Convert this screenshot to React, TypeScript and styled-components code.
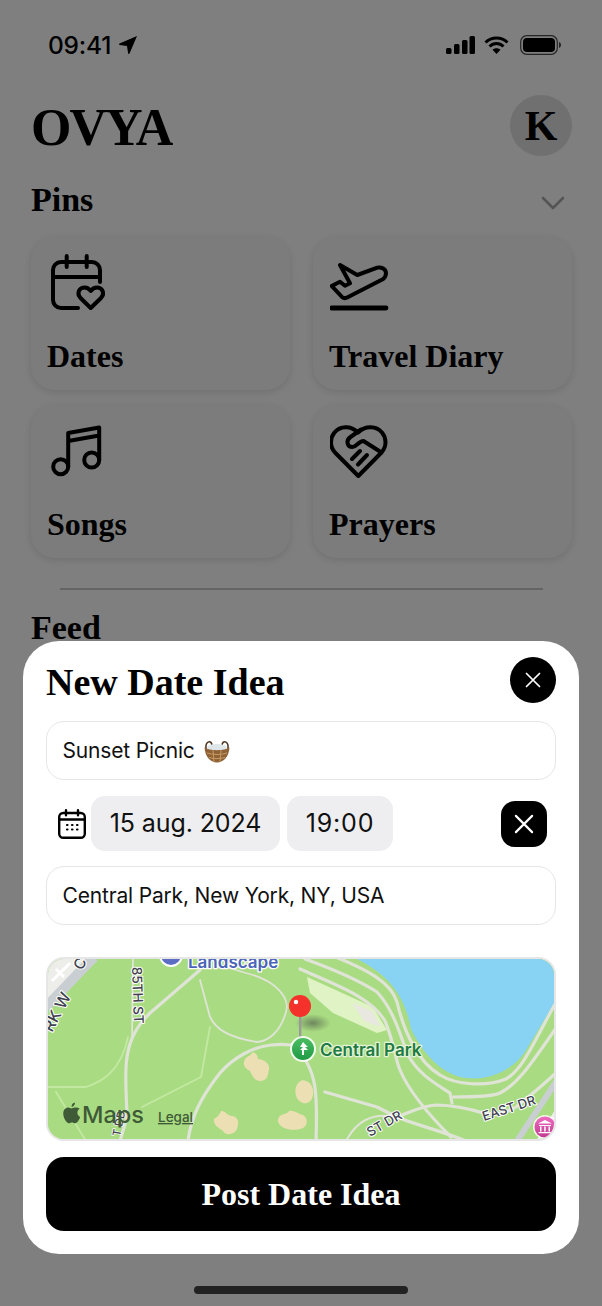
import React from "react";
import styled, { createGlobalStyle } from "styled-components";

const Global = createGlobalStyle`
  html, body { margin: 0; padding: 0; background: #fff; }
  * { box-sizing: border-box; }
`;
const serif = `"Liberation Serif", "Times New Roman", serif`;
const sans = `Inter, "Liberation Sans", Arial, sans-serif`;

const Screen = styled.div`
  position: relative; width: 602px; height: 1306px; overflow: hidden; background: #fff; color: #000;
`;
const Page = styled.div`display: flex; flex-direction: column; padding: 0 30px 0 31px;`;
const StatusBar = styled.div`
  height: 95px; margin: 0 11px 0 17px; padding-top: 35px; display: flex; align-items: flex-start; justify-content: space-between;
`;
const StatusGroup = styled.div<{ $gap: number }>`display: flex; align-items: center; gap: ${p => p.$gap}px; height: 20px;`;
const Time = styled.span`font: 500 24.5px/20px ${sans}; letter-spacing: -0.2px;`;
const Header = styled.header`height: 61px; display: flex; align-items: center; justify-content: space-between;`;
const Logo = styled.h1`margin: 0; font: 700 52px/61px ${serif}; letter-spacing: -2px; position: relative; top: 2px;`;
const Avatar = styled.div`
  width: 62px; height: 61px; border-radius: 50%; background: #e0e0e0; display: flex; align-items: center; justify-content: center;
  font: 700 42px/1 ${serif};
`;
const SectionHead = styled.div`margin: 28px 0 21px; height: 32px; display: flex; align-items: center; justify-content: space-between;`;
const SectionTitle = styled.h2`margin: 0; font: 700 34px/32px ${serif};`;
const Chevron = styled.svg`margin: 6px 7px 0 0; fill: none; stroke: #a8a8a8; stroke-width: 2.6; stroke-linecap: round; stroke-linejoin: round;`;
const Grid = styled.div`display: grid; grid-template-columns: 259px 259px; grid-auto-rows: 153px; column-gap: 23px; row-gap: 15px;`;
const Card = styled.div`
  background: #f8f8f8; border-radius: 24px; box-shadow: 0 2px 9px rgba(0,0,0,.13);
  padding: 13px 16px 14px 16px; display: flex; flex-direction: column; justify-content: space-between;
`;
const IconBox = styled.svg`
  width: 64px; height: 64px; margin-left: 1px; fill: none; stroke: #000; stroke-linecap: round; stroke-linejoin: round; stroke-width: 4;
`;
const CardLabel = styled.div`font: 700 32px/40px ${serif};`;
const Divider = styled.hr`margin: 30px 29px 0; border: 0; border-top: 2px solid #c8c8c8;`;
const FeedTitle = styled(SectionTitle)`margin-top: 22px;`;
const Scrim = styled.div`position: absolute; inset: 0; background: rgba(0,0,0,.5);`;
const Sheet = styled.section`
  position: absolute; left: 23px; top: 641px; width: 556px; height: 613px; background: #fff; border-radius: 36px;
  padding: 16px 23px 23px; display: flex; flex-direction: column;
`;
const SheetHead = styled.div`height: 46px; display: flex; align-items: center; justify-content: space-between;`;
const SheetTitle = styled.h2`margin: 4px 0 0; font: 700 38px/46px ${serif};`;
const RoundClose = styled.button`
  width: 46px; height: 46px; border: 0; padding: 0; border-radius: 50%; background: #000; display: flex; align-items: center; justify-content: center;
`;
const SquareClose = styled(RoundClose)`border-radius: 14px; margin-left: auto; margin-right: 9px;`;
const Field = styled.div<{ $top: number }>`
  margin-top: ${p => p.$top}px; height: 59px; border: 1.5px solid #e6e6e6; border-radius: 18px; padding: 0 15.5px;
  display: flex; align-items: center; gap: 8px; font: 400 21px/1 ${sans}; letter-spacing: -0.17px; color: #111;
`;
const DateRow = styled.div`margin-top: 16px; height: 55px; padding-left: 12px; display: flex; align-items: center;`;
const Pill = styled.div<{ $w: number; $gap: number; $track: number }>`
  width: ${p => p.$w}px; height: 55px; margin-left: ${p => p.$gap}px; border-radius: 14px; background: #eeeef0;
  display: flex; align-items: center; justify-content: center; font: 400 25px/1 ${sans}; letter-spacing: ${p => p.$track}px; color: #111;
`;
const MapFrame = styled.div`
  margin-top: 32px; height: 184px; border: 2px solid #e6e6e6; border-radius: 18px; overflow: hidden; background: #a9dc82;
`;
const MapSvg = styled.svg`display: block; width: 100%; height: 100%;`;
const PostButton = styled.button`
  margin-top: 16px; height: 74px; border: 0; border-radius: 18px; background: #000; color: #fff; font: 700 32px/1 ${serif};
`;
const HomeBar = styled.div`position: absolute; left: 194px; top: 1286px; width: 214px; height: 8px; border-radius: 4px; background: #222;`;

const Cross = ({ s }: { s: number }) => (
  <svg width={s} height={s} viewBox="0 0 16 16" fill="none" stroke="#fff" strokeWidth="1.7" strokeLinecap="round">
    <path d="M1.5 1.5l13 13M14.5 1.5l-13 13" />
  </svg>
);

const cards: { label: string; icon: React.ReactNode }[] = [
  { label: "Dates", icon: (
    <>
      <path d="M30 58H13a8 8 0 0 1-8-8V20a8 8 0 0 1 8-8h31a8 8 0 0 1 8 8v12" />
      <path d="M18.700 6v11M38.700 6v11M5 27h47" />
      <path d="M42.700 58L32.500 48C28 43 31.500 37.500 36.500 37.500 39 37.500 41 38.500 42.700 41 44.500 38.500 46.500 37.500 49 37.500 54 37.500 57.500 43 53 48z" />
    </>
  ) },
  { label: "Travel Diary", icon: (
    <g transform="translate(-2 0)">
      <path d="M12 15L29.300 25 49.300 17.700c4-1.200 8.700 1.600 8.700 5.600 0 2.500-1.300 4.500-3.300 6L18.700 47.700c-1.800.7-3.800.4-5-1L3.700 36l8.300-4.300 5 4 5-2.400L12 15z" />
      <path d="M3.500 58h54.500" strokeWidth="4.800" />
    </g>
  ) },
  { label: "Songs", icon: (
    <g transform="translate(0 6)">
      <circle cx="12.700" cy="42.700" r="7.500" />
      <circle cx="43.700" cy="36" r="7.500" />
      <path d="M20.200 42.700V9L51.200 3.500V36M20.200 17L51.200 11.500" />
    </g>
  ) },
  { label: "Prayers", icon: (
    <g transform="translate(-2 1)">
      <path d="M30.300 57L7 33.500C1.500 27.500 2 19 6.500 13.500 12 7 22.500 6 30 13.500 37.500 6 48.500 7 54 13.500c4.500 5.500 5 14 -.5 20z" />
      <path d="M33 10.500L22.500 18c-5 3.500-3.500 10 2 10 4 0 6-6 11-6l18 11.500" />
      <path d="M30 45.500l9-9.500M24 40l8-8" />
    </g>
  ) },
];

const Basket = () => (
  <svg width="28" height="25" viewBox="0 0 28 25">
    <path d="M3 11C2 3 9 1 9 8M25 11c1-8-6-10-6-3" fill="none" stroke="#4d3522" strokeWidth="1.600" />
    <ellipse cx="14" cy="9.500" rx="10" ry="3.600" fill="#dfe6ea" />
    <path d="M1.500 9.500C6 13 22 13 26.500 9.500 26 18 21 24.500 14 24.500S2 18 1.500 9.500z" fill="#8f6337" />
    <path d="M4 15c6 2 14 2 20 0M6 19.500c5 1.500 11 1.500 16 0M10 12l1 12M18 12l-1 12" fill="none" stroke="#c79a62" strokeWidth="1" />
  </svg>
);

const label = { fontFamily: "Inter, sans-serif", paintOrder: "stroke" as const, strokeLinejoin: "round" as const };

const MapArt = () => (
  <MapSvg viewBox="2 2 506 180" preserveAspectRatio="none">
    <defs>
      <linearGradient id="mus" x1="0" y1="0" x2="0" y2="1"><stop offset="0" stopColor="#f06ac0" /><stop offset="1" stopColor="#c23a92" /></linearGradient>
      <linearGradient id="prk" x1="0" y1="0" x2="0" y2="1"><stop offset="0" stopColor="#4bbd62" /><stop offset="1" stopColor="#1f9a45" /></linearGradient>
      <radialGradient id="shd"><stop offset="0" stopColor="#5a6a50" stopOpacity=".75" /><stop offset="1" stopColor="#5a6a50" stopOpacity="0" /></radialGradient>
    </defs>
    <rect x="0" y="0" width="512" height="184" fill="#a9dc82" />
    <path d="M0 0H44L0 46z" fill="#ededea" />
    <path d="M0 50L48 0" stroke="#c9ced2" strokeWidth="10" />
    <path d="M6 24L24 6M10 12l8 8" stroke="#fff" strokeWidth="3" fill="none" />
    <path d="M261 20L327 50 341 73 331 76 287 56 264 36z" fill="#dff3c4" />
    <path d="M306 46L326 54 335 70 318 64z" fill="#e9e8e0" />
    <path d="M303 -2C340 15 358 35 365 72 376 95 395 118 420 121 445 124 470 112 482 90L512 40V-2z" fill="#88d2f3" />
    <g fill="none" stroke="#dfe4d6" strokeLinecap="round" strokeLinejoin="round">
      <g strokeWidth="3.200">
        <path d="M287 -1C320 12 345 25 351 45 358 75 372 105 394 118 410 128 440 130 460 122 478 112 490 80 512 42" />
        <path d="M259 2C295 15 320 28 331 35 345 50 352 70 361 96 372 118 392 128 404 136L406 146" />
        <path d="M254 12C290 28 325 40 339 64 348 85 350 105 354 113 362 132 380 155 405 180" />
        <path d="M407 140C425 140 445 140 454 136 470 128 482 112 512 68" />
        <path d="M279 135L331 150 351 160C365 155 375 149 390 148 405 148 425 152 437 156 450 158 462 155 470 150 480 142 495 130 512 114" />
        <path d="M260 104C268 118 272 130 270 184" />
        <path d="M351 160C370 168 390 172 420 184" />
        <path d="M300 184C310 165 325 155 351 160" strokeWidth="2" />
        <path d="M154 13L104 56C92 68 84 80 81 100 78 120 81 145 81 160L74 184" />
        <path d="M142 184C145 160 155 140 174 116 188 100 207 90 225 88 235 87 245 87 256 90" />
      </g>
      <g strokeWidth="1.800">
        <path d="M87 0L86 80" />
        <path d="M154 23L164 60C170 72 181 80 211 85 222 84 234 76 240 55 244 42 232 24 200 16L180 10" />
        <path d="M0 130H40C55 125 75 115 82 80" stroke="#c3e8a1" />
        <path d="M10 135L40 184M96 150L155 120 164 70" stroke="#c3e8a1" />
      </g>
    </g>
    <path d="M471 184L512 122" stroke="#c9ced2" strokeWidth="6" />
    <path d="M490 184L512 148V184z" fill="#f0f0ee" />
    <g fill="#ecdfb4">
      <path d="M198 105c1-6 6-5 8-9 3-2 6 3 6 6 5 0 12 4 11 10-1 7-2 12-9 12-6 0-8-6-10-10-3-2-7-4-6-9z" />
      <path d="M168 162c3-2 5-3 7-8 4-1 6 5 12 5 6 2 6 7 4 13-3 6-11 7-14 2-4-3-10-6-9-12z" />
      <path d="M233 160c3-4 8-2 10-6 6-1 10 4 14 4 5 3 5 10 0 13-6 3-18 2-22-2-3-3-4-6-2-9z" />
      <path d="M250 130c2-5 6-8 10-6 6 2 8 9 7 14-1 7-6 9-10 8-6-2-9-9-7-16z" />
    </g>
    <ellipse cx="267" cy="66" rx="18" ry="9" fill="url(#shd)" />
    <rect x="253" y="58" width="2.400" height="26" fill="#9a9a9a" />
    <circle cx="254" cy="49" r="11" fill="#f4312b" />
    <circle cx="250" cy="45" r="2.200" fill="#fff" />
    <circle cx="257" cy="92" r="13" fill="#fff" opacity=".85" />
    <circle cx="257" cy="92" r="11" fill="url(#prk)" />
    <path d="M257 85l5 5h-3l3 3h-8l3-3h-3zM256 93h2v5h-2z" fill="#fff" />
    <circle cx="125" cy="-2" r="12" fill="#fff" />
    <circle cx="125" cy="-2" r="10" fill="#5b6ec4" />
    <text x="142" y="11" fontSize="17" fontWeight="600" fill="#4a64b8" stroke="#fff" strokeWidth="2.500" style={label}>Landscape</text>
    <text x="274" y="99" fontSize="17" fontWeight="600" fill="#1d7a42" stroke="#e4f3d6" strokeWidth="2.500" style={label}>Central Park</text>
    <text transform="translate(86 10) rotate(88)" fontSize="13.500" fontWeight="500" fill="#3f4250" stroke="#fff" strokeWidth="2" style={label}>85TH ST</text>
    <text transform="translate(6 76) rotate(-62)" fontSize="16" fontWeight="500" fill="#3f4250" stroke="#fff" strokeWidth="2" style={label}>RK W</text>
    <text transform="translate(36 14) rotate(-62)" fontSize="15" fontWeight="500" fill="#3f4250" stroke="#fff" strokeWidth="2" style={label}>C</text>
    <text transform="translate(438 164) rotate(-18)" fontSize="13" fontWeight="500" fill="#3f4250" stroke="#fff" strokeWidth="2" style={label}>EAST DR</text>
    <text transform="translate(324 180) rotate(-30)" fontSize="13" fontWeight="500" fill="#3f4250" stroke="#fff" strokeWidth="2" style={label}>ST DR</text>
    <text transform="translate(74 180) rotate(-78)" fontSize="11" fontWeight="500" fill="#3f4250" stroke="#fff" strokeWidth="1.500" style={label}>T DD</text>
    <g transform="translate(1 11) translate(24 147) scale(1.25) translate(-24 -147)">
      <path d="M27 141c-1.200 0-2.200.7-2.700.7-.6 0-1.500-.7-2.500-.7-2 0-4 1.700-4 4.800 0 3.600 2.600 7.700 4.500 7.700.9 0 1.400-.6 2.500-.6s1.500.6 2.500.6c1.700 0 3.500-3 4-5-2.500-1-3.200-5 -.3-6.500-.8-.6-2-1-4-1zM24.500 140.500c1.300-.1 2.800-1.500 2.700-3.500-1.500.1-3 1.600-2.700 3.500z" fill="#3f5a36" />
    </g>
    <text x="36" y="166" fontSize="23.500" fontWeight="500" fill="#3f5a36" style={{ fontFamily: "Inter, sans-serif" }}>Maps</text>
    <text x="112" y="165" fontSize="13.500" fontWeight="500" fill="#3f5a36" textDecoration="underline" style={{ fontFamily: "Inter, sans-serif" }}>Legal</text>
    <circle cx="499" cy="170" r="12" fill="#fff" opacity=".8" />
    <circle cx="499" cy="170" r="10.500" fill="url(#mus)" />
    <path d="M499 163l7 3.500h-14zM493 168h12v1h-12zM494 169.500h1.500v5H494zM498.200 169.500h1.500v5h-1.500zM502.500 169.500h1.500v5h-1.500zM492.500 175h13v1.300h-13z" fill="#fff" />
  </MapSvg>
);

export default function App() {
  return (
    <Screen>
      <Global />
      <Page>
        <StatusBar>
          <StatusGroup $gap={8}>
            <Time>09:41</Time>
            <svg width="18" height="18" viewBox="0 0 18 18"><path d="M18 0L10.500 17.600c-.4.7-1.300.5-1.400-.3L8 10 .7 9C0 8.800-.2 7.900.5 7.500z" /></svg>
          </StatusGroup>
          <StatusGroup $gap={9}>
            <svg width="29" height="18" viewBox="0 0 29 18">
              <rect x="0" y="12" width="5.500" height="6" rx="1.500" /><rect x="8" y="8" width="5.500" height="10" rx="1.500" /><rect x="16" y="4" width="5.500" height="14" rx="1.500" /><rect x="23.500" y="0" width="5.500" height="18" rx="1.500" />
            </svg>
            <svg width="25" height="18" viewBox="0 0 25 18" fill="none" stroke="#000" strokeWidth="3" style={{ flex: "none" }}>
              <path d="M1.500 6.500C7.500 .5 17.500 .5 23.500 6.500M5.500 10.500C9.500 6.500 15.500 6.500 19.500 10.500" />
              <path d="M12.500 18l-4-4.300c2.200-2 5.800-2 8 0z" fill="#000" stroke="none" />
            </svg>
            <svg width="41" height="20" viewBox="0 0 41 20" style={{ marginLeft: 2 }}>
              <rect x=".7" y=".7" width="36.600" height="18.600" rx="6" fill="none" stroke="#4a4a4a" strokeWidth="1.200" />
              <rect x="3" y="3" width="32" height="14" rx="4" />
              <path d="M39 7c1.300.4 2 1.600 2 3s-.7 2.600-2 3z" fill="#4a4a4a" />
            </svg>
          </StatusGroup>
        </StatusBar>
        <Header>
          <Logo>OVYA</Logo>
          <Avatar>K</Avatar>
        </Header>
        <SectionHead>
          <SectionTitle>Pins</SectionTitle>
          <Chevron width="24" height="14" viewBox="0 0 24 14"><path d="M2 2l10 10L22 2" /></Chevron>
        </SectionHead>
        <Grid>
          {cards.map(c => (
            <Card key={c.label}>
              <IconBox viewBox="0 0 64 64">{c.icon}</IconBox>
              <CardLabel>{c.label}</CardLabel>
            </Card>
          ))}
        </Grid>
        <Divider />
        <FeedTitle>Feed</FeedTitle>
      </Page>
      <Scrim />
      <Sheet>
        <SheetHead>
          <SheetTitle>New Date Idea</SheetTitle>
          <RoundClose aria-label="Close"><Cross s={16} /></RoundClose>
        </SheetHead>
        <Field $top={18}>Sunset Picnic <Basket /></Field>
        <DateRow>
          <svg width="28" height="30" viewBox="0 0 28 30" fill="none" stroke="#000" strokeWidth="2.400" strokeLinecap="round">
            <rect x="1.200" y="4" width="25.600" height="24.800" rx="4" />
            <path d="M8 1.200v5M20 1.200v5M1.200 10.500h25.600" />
            <path d="M9 16h.5M14 16h.5M19 16h.5M9 20.500h.5M14 20.500h.5M19 20.500h.5" strokeWidth="2.200" />
          </svg>
          <Pill $w={189} $gap={5} $track={-0.1}>15 aug. 2024</Pill>
          <Pill $w={106} $gap={7} $track={0.8}>19:00</Pill>
          <SquareClose aria-label="Clear"><Cross s={20} /></SquareClose>
        </DateRow>
        <Field $top={15}>Central Park, New York, NY, USA</Field>
        <MapFrame><MapArt /></MapFrame>
        <PostButton>Post Date Idea</PostButton>
      </Sheet>
      <HomeBar />
    </Screen>
  );
}
